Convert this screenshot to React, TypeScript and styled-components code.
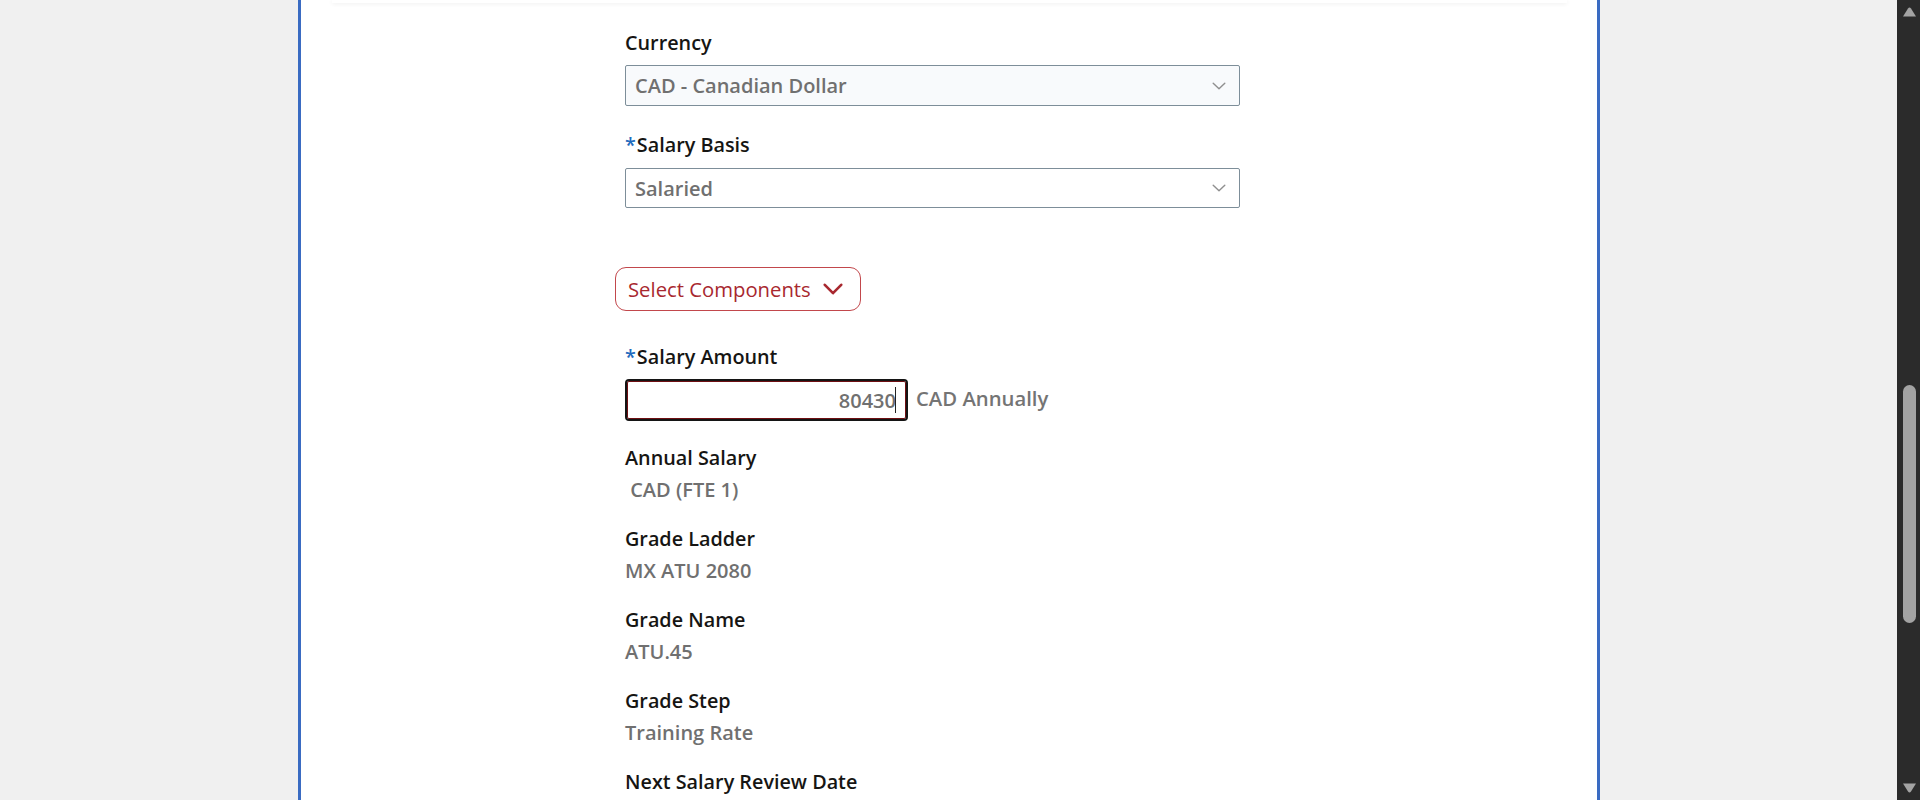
import React from "react";
import styled, { createGlobalStyle } from "styled-components";

const GlobalStyle = createGlobalStyle`
  html, body { margin: 0; padding: 0; height: 800px; overflow: hidden; }
  body { font-family: "Open Sans", "Noto Sans", Arial, sans-serif; background: #f0f0f0; }
  * { box-sizing: border-box; }
`;

const Screen = styled.div`
  display: flex;
  width: 1920px;
  height: 800px;
  overflow: hidden;
`;

const Viewport = styled.div`
  flex: 1;
  background: #f0f0f0;
  display: flex;
`;

const Card = styled.div`
  width: 1302px;
  margin-left: 298px;
  height: 100%;
  background: #ffffff;
  border-left: 3px solid #3a6bc2;
  border-right: 3px solid #3a6bc2;
  display: flex;
  flex-direction: column;
`;

const PrevSection = styled.div`
  height: 3px;
  margin: 0 30px 0 31px;
  background: #ffffff;
  box-shadow: 0 1px 4px rgba(0, 0, 0, 0.07);
`;

const Form = styled.div`
  display: flex;
  flex-direction: column;
  align-items: flex-start;
  padding-left: 324px;
  padding-top: 26px;
`;

const Field = styled.div<{ $mt?: number }>`
  display: flex;
  flex-direction: column;
  align-items: flex-start;
  margin-top: ${(p) => p.$mt ?? 0}px;
`;

const Label = styled.div<{ $lh?: number }>`
  font-size: 19.8px;
  font-weight: 600;
  color: #161513;
  line-height: ${(p) => p.$lh ?? 28}px;
  white-space: nowrap;
`;

const Req = styled.span`
  color: #1f6bbd;
  margin-right: 1px;
`;

const SelectBox = styled.div<{ $bg: string; $h: number; $mt: number }>`
  margin-top: ${(p) => p.$mt}px;
  width: 615px;
  height: ${(p) => p.$h}px;
  border: 1px solid #7d8e99;
  border-radius: 2px;
  background: ${(p) => p.$bg};
  display: flex;
  align-items: center;
  padding-left: 9px;
  padding-right: 13px;
  font-size: 20px;
  color: #707070;
  font-weight: 600;
`;

const SelectText = styled.span`
  flex: 1;
  white-space: nowrap;
`;

const ComponentsButton = styled.button`
  margin-left: -10px;
  height: 44px;
  width: 246px;
  border: 1px solid #c2474c;
  border-radius: 11px;
  background: #ffffff;
  color: #a8282f;
  font-family: inherit;
  font-size: 20.3px;
  font-weight: 500;
  display: flex;
  align-items: center;
  padding: 0 0 0 12px;
  gap: 12px;
  cursor: pointer;
`;

const AmountRow = styled.div`
  margin-top: 8px;
  display: flex;
  align-items: center;
  gap: 8px;
`;

const AmountBox = styled.div`
  width: 283px;
  height: 42px;
  border: 2px solid #141414;
  border-radius: 4px;
  box-shadow: inset 0 0 0 1px #6e0e12;
  display: flex;
  align-items: center;
  justify-content: flex-end;
  padding-right: 10px;
  font-size: 20px;
  color: #707070;
  font-weight: 600;
`;

const Caret = styled.span`
  display: inline-block;
  width: 1px;
  height: 26px;
  background: #222;
  margin-left: -1px;
`;

const Unit = styled.span`
  font-size: 20.3px;
  font-weight: 600;
  color: #747474;
  white-space: pre;
  padding-bottom: 4px;
`;

const Value = styled.div`
  font-size: 20px;
  font-weight: 600;
  color: #707070;
  line-height: 31px;
  white-space: pre;
`;

const ScrollTrack = styled.div`
  width: 23px;
  height: 800px;
  background: #2b2b2b;
  display: flex;
  flex-direction: column;
  align-items: center;
  padding: 6px 0 6px 2px;
`;

const ScrollSpace = styled.div<{ $h: number }>`
  height: ${(p) => p.$h}px;
  flex: none;
`;

const Thumb = styled.div`
  width: 13px;
  height: 238px;
  border-radius: 7px;
  background: #a3a3a3;
  flex: none;
`;

const Chevron = ({ stroke, w, h, sw }: { stroke: string; w: number; h: number; sw: number }) => (
  <svg width={w} height={h} viewBox={`0 0 ${w} ${h}`} fill="none">
    <path
      d={`M${sw / 2 + 0.5} ${sw / 2 + 0.5} L${w / 2} ${h - sw / 2 - 0.5} L${w - sw / 2 - 0.5} ${sw / 2 + 0.5}`}
      stroke={stroke}
      strokeWidth={sw}
      strokeLinecap="round"
      strokeLinejoin="round"
    />
  </svg>
);

const Arrow = ({ up }: { up: boolean }) => (
  <svg width="15" height="11" viewBox="0 0 15 11">
    {up ? (
      <path d="M1 10.5 L6 2.5 Q7.5 0.5 9 2.5 L14 10.5 Z" fill="#a3a3a3" />
    ) : (
      <path d="M1 0.5 L6 8.5 Q7.5 10.5 9 8.5 L14 0.5 Z" fill="#a3a3a3" />
    )}
  </svg>
);

const displayFields: { label: string; value: string }[] = [
  { label: "Annual Salary", value: " CAD (FTE 1)" },
  { label: "Grade Ladder", value: "MX ATU 2080" },
  { label: "Grade Name", value: "ATU.45" },
  { label: "Grade Step", value: "Training Rate" },
  { label: "Next Salary Review Date", value: "" },
];

export default function App() {
  return (
    <>
      <GlobalStyle />
      <Screen>
        <Viewport>
          <Card>
            <PrevSection />
            <Form>
              <Field>
                <Label>Currency</Label>
                <SelectBox $bg="#f8fafc" $h={41} $mt={8}>
                  <SelectText>CAD - Canadian Dollar</SelectText>
                  <Chevron stroke="#8f8f8f" w={14} h={8} sw={1.4} />
                </SelectBox>
              </Field>
              <Field $mt={25}>
                <Label>
                  <Req>*</Req>Salary Basis
                </Label>
                <SelectBox $bg="#ffffff" $h={40} $mt={9}>
                  <SelectText>Salaried</SelectText>
                  <Chevron stroke="#8f8f8f" w={14} h={8} sw={1.4} />
                </SelectBox>
              </Field>
              <Field $mt={59}>
                <ComponentsButton type="button">
                  Select Components
                  <Chevron stroke="#a8282f" w={20} h={12} sw={2.6} />
                </ComponentsButton>
              </Field>
              <Field $mt={32}>
                <Label>
                  <Req>*</Req>Salary Amount
                </Label>
                <AmountRow>
                  <AmountBox>
                    80430
                    <Caret />
                  </AmountBox>
                  <Unit>CAD Annually</Unit>
                </AmountRow>
              </Field>
              {displayFields.map((f, i) => (
                <Field key={f.label} $mt={i === 0 ? 21 : 18}>
                  <Label $lh={32}>{f.label}</Label>
                  {f.value && <Value>{f.value}</Value>}
                </Field>
              ))}
            </Form>
          </Card>
        </Viewport>
        <ScrollTrack>
          <Arrow up />
          <ScrollSpace $h={368} />
          <Thumb />
          <ScrollSpace $h={160} />
          <Arrow up={false} />
        </ScrollTrack>
      </Screen>
    </>
  );
}
